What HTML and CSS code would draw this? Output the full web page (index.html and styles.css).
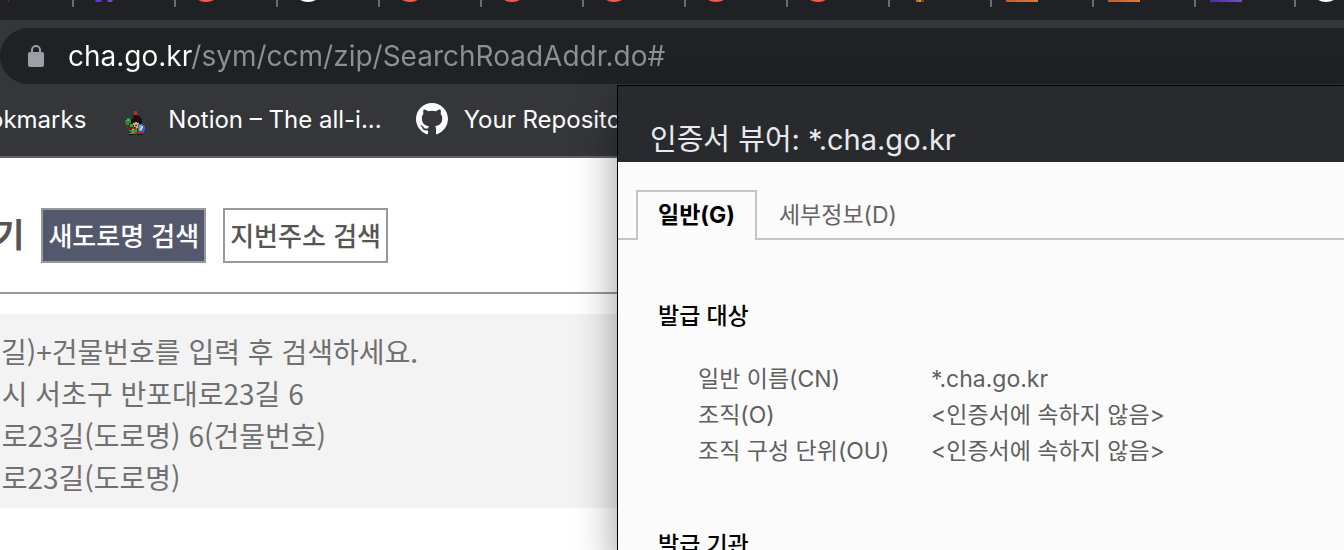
FILE: index.html
```html
<!DOCTYPE html>
<html lang="ko">
<head>
    <meta charset="UTF-8">
    <meta name="viewport" content="width=device-width, initial-scale=1.0">
    <title>cha.go.kr</title>
    <link rel="stylesheet" href="styles.css">
</head>
<body>
    <div class="browser">
        <div class="tab-strip">
            <div class="tab tab-first"><svg viewBox="0 30 32 2"><rect x="8" y="30" width="1" height="2" fill="#7a2a28"/></svg></div>
            <div class="tab"><svg viewBox="0 30 32 2"><path d="M7 30h7l-1 2H8z" fill="#5a35f0"/><path d="M19 30h6l-1 2h-4z" fill="#7a3fd6"/></svg></div>
            <div class="tab"><svg viewBox="0 30 32 2"><circle cx="16" cy="16" r="16" fill="#ee5f4f"/></svg></div>
            <div class="tab"><svg viewBox="0 30 32 2"><circle cx="16" cy="16" r="16" fill="#fff"/></svg></div>
            <div class="tab"><svg viewBox="0 30 32 2"><circle cx="16" cy="16" r="16" fill="#ee5f4f"/></svg></div>
            <div class="tab"><svg viewBox="0 30 32 2"><circle cx="16" cy="16" r="16" fill="#ee5f4f"/></svg></div>
            <div class="tab"><svg viewBox="0 30 32 2"><circle cx="16" cy="16" r="16" fill="#ee5f4f"/></svg></div>
            <div class="tab"><svg viewBox="0 30 32 2"><circle cx="16" cy="16" r="16" fill="#ee5f4f"/></svg></div>
            <div class="tab"><svg viewBox="0 30 32 2"><circle cx="16" cy="16" r="16" fill="#ee5f4f"/></svg></div>
            <div class="tab"><svg viewBox="0 30 32 2"><rect x="12" y="30" width="3" height="2" fill="#c4682f"/><rect x="15" y="30" width="2" height="2" fill="#ef8a4c"/><rect x="17" y="30" width="3" height="2" fill="#7a4630"/></svg></div>
            <div class="tab"><svg viewBox="0 30 32 2"><rect y="30" width="32" height="2" fill="url(#orange)"/></svg></div>
            <div class="tab"><svg viewBox="0 30 32 2"><rect y="30" width="32" height="2" fill="url(#orange)"/></svg></div>
            <div class="tab tab-short"><svg viewBox="0 30 32 2"><rect y="30" width="32" height="2" fill="url(#purple)"/></svg></div>
            <div class="tab"><svg viewBox="0 30 32 2"><circle cx="16" cy="16" r="16" fill="#fff"/>
                <defs>
                    <linearGradient id="orange"><stop offset="0" stop-color="#c55a2b"/><stop offset="1" stop-color="#db7f33"/></linearGradient>
                    <linearGradient id="purple"><stop offset="0" stop-color="#4c2ba0"/><stop offset="1" stop-color="#7350c8"/></linearGradient>
                </defs></svg></div>
        </div>

        <div class="toolbar">
            <div class="omnibox">
                <svg class="lock" viewBox="0 0 16 22" aria-hidden="true">
                    <path d="M4 8V5a4 4 0 0 1 8 0v3" fill="none" stroke="#9aa0a6" stroke-width="2"/>
                    <rect y="7" width="16" height="15" rx="2" fill="#9aa0a6"/>
                </svg>
                <input class="url" type="text" aria-label="URL" spellcheck="false" value="cha.go.kr/sym/ccm/zip/SearchRoadAddr.do#">
            </div>
        </div>

        <nav class="bookmarks">
            <a class="bookmark bookmark-cut" href="#">okmarks</a>
            <a class="bookmark" href="#">
                <svg class="favicon" viewBox="0 0 32 32" aria-hidden="true" shape-rendering="crispEdges">
                    <path d="M14 8h3v4h-3z" fill="#c8281e"/>
                    <path d="M14 12h3v1h3v2h2v5h-1v3H11v-7h2v-3h1z" fill="#15110f"/>
                    <path d="M13 19h6v5h-5v-2h-1z" fill="#d9a07c"/>
                    <path d="M13 19h2v1h-2zM17 19h2v1h-2zM15 22h2v1h-2z" fill="#4b2a1e"/>
                    <path d="M7 15h3v1h1v4H9v2H6v-2H5v-3h2z" fill="#2f8a33"/>
                    <path d="M7 16h2v2H7z" fill="#58b84c"/>
                    <path d="M6 23h2v3H6zM8 25h2v1H8z" fill="#8e2323"/>
                    <path d="M10 21h3v3h-3zM9 27h3v-2h5v6H9v-1h2v-2H9z" fill="#3f9d3a"/>
                    <path d="M12 25h4v2h-4z" fill="#b32a24"/>
                    <path d="M12 26h2v1h-2zM16 23h2v2h-2z" fill="#d9a07c"/>
                    <path d="M15 29h9v2h-9z" fill="#a42822"/>
                    <path d="M9 31h6v1H9zM17 31h6v1h-6z" fill="#15110f"/>
                    <path d="M18 21h5v1h1v1h1v5h-1v1h-5v-1h-1z" fill="#2f62d2"/>
                    <path d="M19 22h3v1h1v3h-1v2h-3z" fill="#6c9cf0"/>
                    <path d="M21 23h2v2h-1v2h-2v-2h1z" fill="#f0d548"/>
                </svg>
                Notion – The all-i...
            </a>
            <a class="bookmark" href="#">
                <svg class="favicon" viewBox="0 0 16 16" aria-hidden="true">
                    <path fill="#fff" d="M8 0C3.58 0 0 3.58 0 8c0 3.54 2.29 6.53 5.47 7.59.4.07.55-.17.55-.38 0-.19-.01-.82-.01-1.49-2.01.37-2.53-.49-2.69-.94-.09-.23-.48-.94-.82-1.13-.28-.15-.68-.52-.01-.53.63-.01 1.08.58 1.23.82.72 1.21 1.87.87 2.33.66.07-.52.28-.87.51-1.07-1.78-.2-3.64-.89-3.64-3.95 0-.87.31-1.59.82-2.15-.08-.2-.36-1.02.08-2.12 0 0 .67-.21 2.2.82.64-.18 1.32-.27 2-.27s1.36.09 2 .27c1.53-1.04 2.2-.82 2.2-.82.44 1.1.16 1.92.08 2.12.51.56.82 1.27.82 2.15 0 3.07-1.87 3.75-3.65 3.95.29.25.54.73.54 1.48 0 1.07-.01 1.93-.01 2.2 0 .21.15.46.55.38A8.01 8.01 0 0 0 16 8c0-4.42-3.58-8-8-8z"/>
                </svg>
                Your Repositories
            </a>
        </nav>
    </div>

    <main class="page">
        <div class="search-head">
            <h1>기</h1>
            <button class="search-btn active" type="button">새도로명 검색</button>
            <button class="search-btn" type="button">지번주소 검색</button>
        </div>
        <ul class="guide">
            <li>(~길)+건물번호를 입력 후 검색하세요.</li>
            <li>별시 서초구 반포대로23길 6</li>
            <li>대로23길(도로명) 6(건물번호)</li>
            <li>대로23길(도로명)</li>
        </ul>
    </main>

    <section class="viewer" role="dialog" aria-labelledby="viewer-title">
        <h2 class="viewer-title" id="viewer-title">인증서 뷰어: *.cha.go.kr</h2>
        <div class="viewer-tabs" role="tablist">
            <button class="viewer-tab selected" type="button" role="tab" aria-selected="true">일반(G)</button>
            <button class="viewer-tab" type="button" role="tab" aria-selected="false">세부정보(D)</button>
        </div>
        <div class="viewer-body">
            <h3>발급 대상</h3>
            <table class="fields">
                <tr>
                    <th scope="row">일반 이름(CN)</th>
                    <td>*.cha.go.kr</td>
                </tr>
                <tr>
                    <th scope="row">조직(O)</th>
                    <td>&lt;인증서에 속하지 않음&gt;</td>
                </tr>
                <tr>
                    <th scope="row">조직 구성 단위(OU)</th>
                    <td>&lt;인증서에 속하지 않음&gt;</td>
                </tr>
            </table>
            <h3>발급 기관</h3>
        </div>
    </section>
</body>
</html>
```
FILE: styles.css
```css
*{
    margin: 0;
    padding: 0;
    box-sizing: border-box;
    list-style: none;
}

body{
    height: 100vh;
    overflow: hidden;
    position: relative;
    background-color: #fff;
    font-family: Inter, "Noto Sans CJK KR", sans-serif;
}

button, input{
    font-family: inherit;
}

/* browser chrome */
.browser{
    background-color: #35363a;
    border-bottom: 2px solid #636267;
}

.tab-strip{
    display: flex;
    height: 20px;
    overflow: hidden;
    background-color: #202124;
}

.tab{
    flex: 0 0 102px;
    height: 7px;
    padding-left: 14px;
    border-right: 2px solid #6b6c6f;
}

.tab svg{
    display: block;
    width: 32px;
    height: 2px;
}

.tab-first{
    flex-basis: 74px;
    padding-left: 0;
}

.tab-short{
    flex-basis: 100px;
}

.toolbar{
    padding-top: 8px;
}

.omnibox{
    display: flex;
    align-items: center;
    gap: 24px;
    height: 56px;
    padding-left: 28px;
    border-radius: 28px 0 0 28px;
    background-color: #202124;
}

.lock{
    width: 16px;
    height: 22px;
}

.url{
    flex: 1;
    height: 40px;
    border: 0;
    outline: 0;
    font-size: 28px;
    color: transparent;
    background: linear-gradient(90deg, #fff 124px, #8e8f91 124px);
    -webkit-background-clip: text;
    background-clip: text;
}

.bookmarks{
    display: flex;
    align-items: center;
    gap: 34px;
    height: 72px;
    padding-bottom: 2px;
    overflow: hidden;
}

.bookmark{
    display: flex;
    align-items: center;
    gap: 16px;
    color: #fff;
    font-size: 24px;
    white-space: nowrap;
    text-decoration: none;
}

.bookmark-cut{
    margin-left: -11px;
}

.favicon{
    width: 32px;
    height: 32px;
}

/* address search page */
.page{
    font-family: "Noto Sans CJK KR", sans-serif;
}

.search-head{
    display: flex;
    align-items: center;
    gap: 17px;
    padding: 50px 0 29px;
    border-bottom: 2px solid #999;
}

.search-head h1{
    margin-left: -6px;
    padding-bottom: 5px;
    font-size: 33px;
    line-height: 40px;
    color: #555;
}

.search-btn{
    height: 55px;
    padding: 0 5px 2px;
    border: 2px solid #999;
    background-color: #fff;
    color: #555;
    font-size: 26px;
    font-weight: 500;
}

.search-btn.active{
    background-color: #53586c;
    color: #fff;
}

.guide{
    margin-top: 20px;
    padding: 16px 0 10px;
    background-color: #f3f3f3;
}

.guide li{
    margin-left: -24px;
    color: #707070;
    font-size: 28px;
    line-height: 42px;
}

/* certificate viewer window */
.viewer{
    position: absolute;
    top: 85px;
    right: 0;
    bottom: 0;
    left: 617px;
    overflow: hidden;
    border: solid #000;
    border-width: 1px 0 0 1px;
    background-color: #fbfbfb;
    box-shadow: 0 20px 40px rgba(0, 0, 0, 0.4);
}

.viewer-title{
    padding: 32px 32px 0;
    background-color: #292a2d;
    color: #e8eaed;
    font-size: 29px;
    font-weight: 400;
    line-height: 44px;
}

.viewer-tabs{
    display: flex;
    padding: 28px 0 0 18px;
    background: linear-gradient(#c4c4c4, #c4c4c4) bottom / 100% 2px no-repeat;
}

.viewer-tab{
    height: 50px;
    padding: 0 20px 6px;
    border: solid transparent;
    border-width: 2px 2px 0;
    background: none;
    color: #646464;
    font-size: 23px;
}

.viewer-tab.selected{
    border-color: #c4c4c4;
    background-color: #fbfbfb;
    color: #000;
    font-weight: 700;
}

.viewer-body{
    padding: 60px 40px;
    font-size: 23px;
    line-height: 32px;
}

.viewer-body h3{
    color: #000;
    font-size: 23px;
    font-weight: 500;
}

.fields{
    margin: 29px 0 60px 40px;
    border-collapse: collapse;
    color: #5f5f5f;
}

.fields th{
    width: 233px;
    font-weight: 400;
    text-align: left;
}

.fields th, .fields td{
    height: 36px;
}
```
